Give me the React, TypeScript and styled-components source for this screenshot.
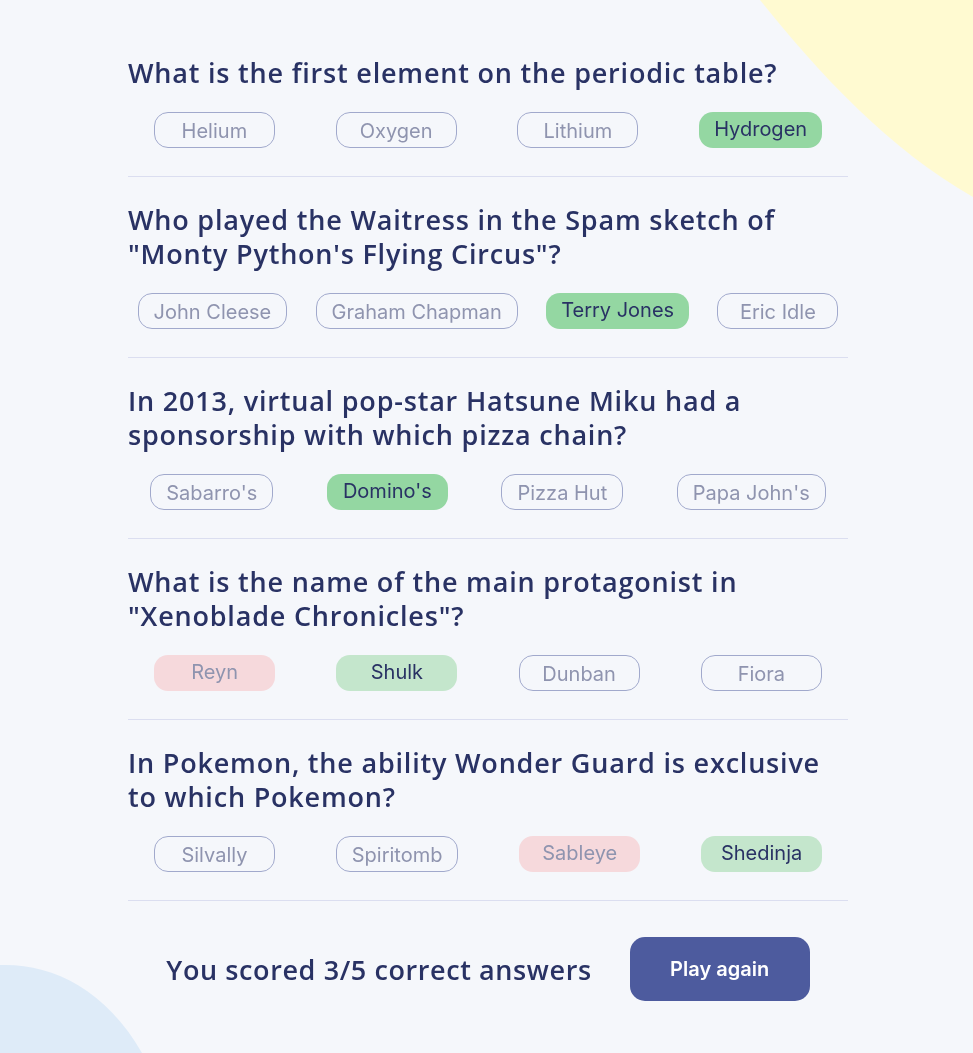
import React from "react";
import styled, { createGlobalStyle, css } from "styled-components";

const GlobalStyle = createGlobalStyle`
  html, body {
    margin: 0;
    padding: 0;
    background: #f5f7fb;
  }
  * { box-sizing: border-box; }
`;

type AnswerState = "neutral" | "picked" | "correct" | "wrong";

interface Question {
  text: string;
  answers: { label: string; state: AnswerState }[];
}

const questions: Question[] = [
  {
    text: "What is the first element on the periodic table?",
    answers: [
      { label: "Helium", state: "neutral" },
      { label: "Oxygen", state: "neutral" },
      { label: "Lithium", state: "neutral" },
      { label: "Hydrogen", state: "picked" },
    ],
  },
  {
    text: 'Who played the Waitress in the Spam sketch of "Monty Python\'s Flying Circus"?',
    answers: [
      { label: "John Cleese", state: "neutral" },
      { label: "Graham Chapman", state: "neutral" },
      { label: "Terry Jones", state: "picked" },
      { label: "Eric Idle", state: "neutral" },
    ],
  },
  {
    text: "In 2013, virtual pop-star Hatsune Miku had a sponsorship with which pizza chain?",
    answers: [
      { label: "Sabarro's", state: "neutral" },
      { label: "Domino's", state: "picked" },
      { label: "Pizza Hut", state: "neutral" },
      { label: "Papa John's", state: "neutral" },
    ],
  },
  {
    text: 'What is the name of the main protagonist in "Xenoblade Chronicles"?',
    answers: [
      { label: "Reyn", state: "wrong" },
      { label: "Shulk", state: "correct" },
      { label: "Dunban", state: "neutral" },
      { label: "Fiora", state: "neutral" },
    ],
  },
  {
    text: "In Pokemon, the ability Wonder Guard is exclusive to which Pokemon?",
    answers: [
      { label: "Silvally", state: "neutral" },
      { label: "Spiritomb", state: "neutral" },
      { label: "Sableye", state: "wrong" },
      { label: "Shedinja", state: "correct" },
    ],
  },
];

const Page = styled.div`
  position: relative;
  min-height: 100vh;
  background: #f5f7fb;
  padding-top: 56px;
  padding-bottom: 52px;
`;

const BlobTop = styled.svg`
  position: fixed;
  top: 0;
  right: 0;
  width: 213px;
  height: 200px;
  z-index: 0;
`;

const BlobBottom = styled.svg`
  position: fixed;
  left: 0;
  bottom: 0;
  width: 142px;
  height: 90px;
  z-index: 0;
`;

const Quiz = styled.main`
  position: relative;
  z-index: 1;
  width: 723px;
  margin: 0 auto;
  padding-left: 3px;
`;

const QuestionBlock = styled.section`
  padding-top: 26px;
  padding-bottom: 28px;
  border-bottom: 1px solid #dbdef0;

  &:first-child {
    padding-top: 0;
  }
`;

const QuestionText = styled.h2`
  margin: 0;
  max-width: 700px;
  font-family: "Open Sans", "Noto Sans", sans-serif;
  font-weight: 600;
  font-size: 27px;
  line-height: 34px;
  letter-spacing: 0.8px;
  color: #293264;
`;

const AnswerRow = styled.div`
  display: flex;
  justify-content: space-around;
  gap: 9px;
  margin-top: 22px;
`;

const pillStates = {
  neutral: css`
    border: 1px solid #a1a9cc;
    color: #8f94af;
    background: transparent;
    padding-top: 2px;
  `,
  picked: css`
    border: none;
    color: #293264;
    background: #94d7a2;
    padding-bottom: 2px;
  `,
  correct: css`
    border: none;
    color: #293264;
    background: #c4e6cc;
    padding-bottom: 2px;
  `,
  wrong: css`
    border: none;
    color: #8f94af;
    background: #f6d9dc;
    padding-bottom: 2px;
  `,
};

const Pill = styled.span<{ $state: AnswerState }>`
  display: inline-flex;
  align-items: center;
  justify-content: center;
  height: 36px;
  min-width: 121px;
  padding-left: 15px;
  padding-right: 15px;
  border-radius: 14px;
  font-family: Inter, "Noto Sans", sans-serif;
  font-weight: 400;
  font-size: 20px;
  white-space: nowrap;
  ${(p) => pillStates[p.$state]}
`;

const Footer = styled.footer`
  display: flex;
  align-items: center;
  justify-content: center;
  gap: 38px;
  margin-top: 36px;
`;

const Score = styled.p`
  margin: 0;
  font-family: "Open Sans", "Noto Sans", sans-serif;
  font-weight: 600;
  font-size: 27px;
  letter-spacing: 0.6px;
  color: #293264;
`;

const PlayButton = styled.button`
  width: 180px;
  height: 64px;
  border: none;
  border-radius: 15px;
  background: #4d5b9e;
  color: #ffffff;
  font-family: Inter, "Noto Sans", sans-serif;
  font-weight: 600;
  font-size: 20px;
  cursor: pointer;
`;

export default function App() {
  return (
    <Page>
      <GlobalStyle />
      <BlobTop viewBox="0 0 213 200" preserveAspectRatio="none">
        <path d="M0 0 C60 75 130 150 213 197 L213 0 Z" fill="#fffad1" />
      </BlobTop>
      <BlobBottom viewBox="0 0 142 90">
        <path d="M0 2 C50 0 105 25 142 90 L0 90 Z" fill="#deebf8" />
      </BlobBottom>
      <Quiz>
        {questions.map((q) => (
          <QuestionBlock key={q.text}>
            <QuestionText>{q.text}</QuestionText>
            <AnswerRow>
              {q.answers.map((a) => (
                <Pill key={a.label} $state={a.state}>
                  {a.label}
                </Pill>
              ))}
            </AnswerRow>
          </QuestionBlock>
        ))}
        <Footer>
          <Score>You scored 3/5 correct answers</Score>
          <PlayButton>Play again</PlayButton>
        </Footer>
      </Quiz>
    </Page>
  );
}
